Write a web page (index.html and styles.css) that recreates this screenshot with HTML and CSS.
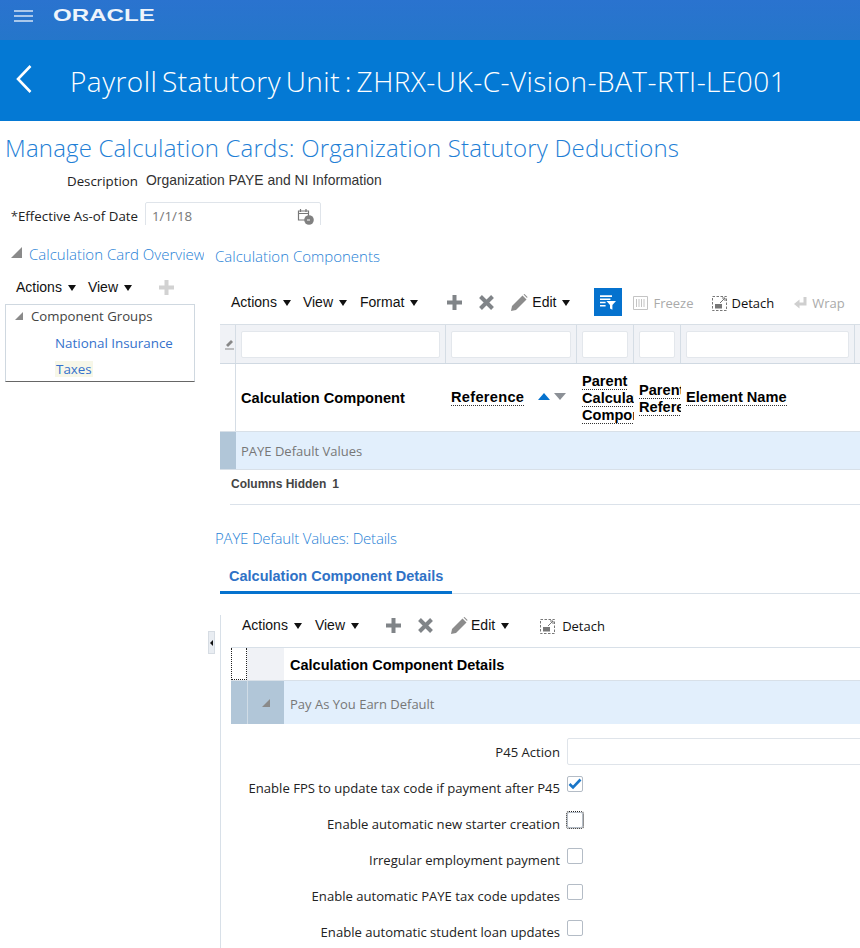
FILE: index.html
```html
<!DOCTYPE html>
<html lang="en">
<head>
<meta charset="utf-8">
<title>Manage Calculation Cards</title>
<link rel="stylesheet" href="styles.css">
</head>
<body>
<header class="topbar">
  <svg class="burger" width="20" height="12" viewBox="0 0 20 12"><path d="M0 1h19M0 6h19M0 11h19" stroke="#d5e4f5" stroke-width="1.6" fill="none"/></svg>
  <span class="logo">ORACLE</span>
</header>
<div class="titlebar">
  <svg class="back" width="18" height="30" viewBox="0 0 18 30"><path d="M15.500 2 L3 15 L15.500 28" stroke="#fff" stroke-width="2.600" fill="none"/></svg>
  <span class="title">Payroll Statutory Unit : ZHRX-UK-C-Vision-BAT-RTI-LE001</span>
</div>
<main>
  <h1 class="page-heading">Manage Calculation Cards: Organization Statutory Deductions</h1>
  <div class="form-row desc-row">
    <span class="form-label">Description</span>
    <span class="form-value">Organization PAYE and NI Information</span>
  </div>
  <div class="form-row date-row">
    <span class="form-label"><span class="req">*</span>Effective As-of Date</span>
    <span class="date-input">1/1/18
      <svg class="cal" width="18" height="17" viewBox="0 0 18 17"><path d="M1.500 3h10v9h-10zM3.500 1v3M9 1v3M1.500 5.500h10" stroke="#777" stroke-width="1.200" fill="none"/><circle cx="12" cy="12" r="4.800" fill="#808080"/><path d="M10 12h3" stroke="#fff"/></svg>
    </span>
  </div>
  <div class="split">
    <span class="splitter"><i></i></span>
    <aside class="left">
      <div class="section-head">
        <span class="tri tri-big"></span>
        <span class="section-title clip">Calculation Card Overview</span>
      </div>
      <div class="toolbar left-tools">
        <span class="menu">Actions<i class="caret"></i></span>
        <span class="menu">View<i class="caret"></i></span>
        <svg class="ico plus-light" width="15" height="15" viewBox="0 0 15 15"><path d="M7.500 0v15M0 7.500h15" stroke="#d2d2d2" stroke-width="4"/></svg>
      </div>
      <div class="tree">
        <div class="tree-root"><span class="tri tri-small"></span>Component Groups</div>
        <a class="tree-link">National Insurance</a>
        <a class="tree-link"><span class="selected">Taxes</span></a>
      </div>
    </aside>
    <section class="right">
      <h2 class="section-title comp-title">Calculation Components</h2>
      <div class="toolbar main-tools">
        <span class="menu">Actions<i class="caret"></i></span>
        <span class="menu">View<i class="caret"></i></span>
        <span class="menu">Format<i class="caret"></i></span>
        <svg class="ico t-plus" width="15" height="15" viewBox="0 0 15 15"><path d="M7.500 0v15M0 7.500h15" stroke="#808488" stroke-width="4"/></svg>
        <svg class="ico t-x" width="15" height="15" viewBox="0 0 15 15"><path d="M1.500 1.500l12 12M13.500 1.500l-12 12" stroke="#808488" stroke-width="4"/></svg>
        <svg class="ico t-pencil" width="17" height="17" viewBox="0 0 17 17"><path d="M0 17l1-5L11.500 1.500l4 4L5 16z" fill="#8c8c8c"/><path d="M12.500.5l1-.5 3 3-.5 1z" fill="#8c8c8c"/></svg>
        <span class="menu edit">Edit<i class="caret"></i></span>
        <span class="filter-btn"><svg width="16" height="15" viewBox="0 0 20 18"><path d="M0 1h15M0 5h13M0 9h7M0 13h7" stroke="#fff" stroke-width="2"/><path d="M8 7h12l-4.500 5v6l-3-1.500V12z" fill="#fff"/></svg></span>
        <span class="tool off t-freeze"><svg width="15" height="14" viewBox="0 0 15 14"><path d="M.500.500h14v13H.500zM3.500 3v8M6 3v8M8.500 3v8M11 3v8" stroke="#c4c4c4" fill="none"/></svg>Freeze</span>
        <span class="tool t-detach"><svg class="detach" width="15" height="15" viewBox="0 0 15 15"><path d="M.500.500h14v14H.500z" stroke="#777" stroke-dasharray="2.500 1.500" fill="none"/><path d="M8 7L13 2M10 2H13v3" stroke="#777" fill="none"/><path d="M3 8h7v4.500H3z" fill="#777"/></svg>Detach</span>
        <span class="tool off t-wrap"><svg width="13" height="13" viewBox="0 0 13 13"><path d="M11 0v7H4" stroke="#cfcfcf" stroke-width="3" fill="none"/><path d="M5.500 2.500v9L0 7z" fill="#cfcfcf"/></svg>Wrap</span>
      </div>
      <div class="table main-table">
        <div class="tr filter-row">
          <div class="td c0"><svg width="10" height="12" viewBox="0 0 10 12"><path d="M1 7l5-5 2 2-5 5z" fill="#888"/><path d="M0 11h9" stroke="#888"/></svg></div>
          <div class="td c1"><span class="filter-input"></span></div>
          <div class="td c2"><span class="filter-input"></span></div>
          <div class="td c3"><span class="filter-input"></span></div>
          <div class="td c4"><span class="filter-input"></span></div>
          <div class="td c5"><span class="filter-input"></span></div>
          <div class="td c6"></div>
        </div>
        <div class="tr head-row">
          <div class="td c0"></div>
          <div class="td c1"><span class="th">Calculation Component</span></div>
          <div class="td c2"><span class="th th-ref"><u>Reference</u></span>
            <span class="sort"><i class="sort-up"></i><i class="sort-down"></i></span></div>
          <div class="td c3"><span class="th stack"><u>Parent</u><u>Calculation</u><u>Component</u></span></div>
          <div class="td c4"><span class="th stack"><u>Parent</u><u>Reference</u></span></div>
          <div class="td c5"><span class="th"><u>Element Name</u></span></div>
          <div class="td c6"></div>
        </div>
        <div class="tr data-row">
          <div class="td c0 sel"></div>
          <div class="td c1"><span class="cell-text">PAYE Default Values</span></div>
        </div>
      </div>
      <div class="status"><b>Columns Hidden</b><b class="count">1</b></div>
      <h2 class="section-title details-title">PAYE Default Values: Details</h2>
      <div class="tabs"><span class="tab">Calculation Component Details</span></div>
      <div class="tab-panel">
        <div class="toolbar detail-tools">
          <span class="menu">Actions<i class="caret"></i></span>
          <span class="menu">View<i class="caret"></i></span>
          <svg class="ico d-plus" width="15" height="15" viewBox="0 0 15 15"><path d="M7.500 0v15M0 7.500h15" stroke="#808488" stroke-width="4"/></svg>
          <svg class="ico t-x" width="15" height="15" viewBox="0 0 15 15"><path d="M1.500 1.500l12 12M13.500 1.500l-12 12" stroke="#808488" stroke-width="4"/></svg>
          <svg class="ico t-pencil" width="17" height="17" viewBox="0 0 17 17"><path d="M0 17l1-5L11.500 1.500l4 4L5 16z" fill="#8c8c8c"/><path d="M12.500.5l1-.5 3 3-.5 1z" fill="#8c8c8c"/></svg>
          <span class="menu edit">Edit<i class="caret"></i></span>
          <span class="tool d-detach"><svg class="detach" width="15" height="15" viewBox="0 0 15 15"><path d="M.500.500h14v14H.500z" stroke="#777" stroke-dasharray="2.500 1.500" fill="none"/><path d="M8 7L13 2M10 2H13v3" stroke="#777" fill="none"/><path d="M3 8h7v4.500H3z" fill="#777"/></svg>Detach</span>
        </div>
        <div class="detail-table">
          <div class="dt-head">
            <span class="dt-a dotted"></span><span class="dt-b"></span>
            <span class="dt-c">Calculation Component Details</span>
          </div>
          <div class="dt-row">
            <span class="dt-a sel"></span><span class="dt-b sel"><i class="tri tri-small"></i></span>
            <span class="dt-text">Pay As You Earn Default</span>
          </div>
        </div>
        <form class="fields">
          <div class="field"><label>P45 Action</label><span class="text-input"></span></div>
          <div class="field"><label>Enable FPS to update tax code if payment after P45</label><span class="check"><svg width="14" height="12" viewBox="0 0 14 12"><path d="M1.500 6l3.500 3.500L12.500 1.500" stroke="#1a76c8" stroke-width="2.600" fill="none"/></svg></span></div>
          <div class="field"><label>Enable automatic new starter creation</label><span class="check focus"></span></div>
          <div class="field"><label>Irregular employment payment</label><span class="check"></span></div>
          <div class="field"><label>Enable automatic PAYE tax code updates</label><span class="check"></span></div>
          <div class="field"><label>Enable automatic student loan updates</label><span class="check"></span></div>
        </form>
      </div>
    </section>
  </div>
</main>
</body>
</html>
```
FILE: styles.css
```css
html, body { margin: 0; padding: 0; }
body {
  width: 860px; height: 948px; overflow: hidden; background: #fff;
  font-family: "Open Sans", "Liberation Sans", sans-serif; font-size: 13px; color: #222;
}
h1, h2 { margin: 0; font-weight: 300; }
i { font-style: normal; display: inline-block; }

.topbar { height: 40px; background: linear-gradient(#2a73cf, #2576ca); display: flex; align-items: flex-start; box-sizing: border-box; padding: 10px 0 0 14px; }
.burger { display: block; }
.logo { margin-left: 19px; color: #eef4fb; font: 700 16.500px/12px "Liberation Sans", sans-serif; display: inline-block; transform: scaleX(1.46); transform-origin: 0 0; margin-top: -1px; height: 12px; }
.titlebar { height: 81px; background: #0479d4; display: flex; align-items: center; color: #fff; padding-left: 15px; box-sizing: border-box; }
.title { margin-left: 37px; font-size: 28px; font-weight: 300; line-height: 40px; font-family: "Open Sans", sans-serif; letter-spacing: .46px; word-spacing: -3px; white-space: nowrap; }
.back { display: block; margin-top: -4px; }

.page-heading { font-size: 24px; line-height: 32px; color: #1f7fd6; padding: 11px 0 0 5px; letter-spacing: .19px; white-space: nowrap; }
.form-row { display: flex; font-size: 13.300px; }
.form-label { width: 138px; text-align: right; color: #222; white-space: nowrap; }
.form-value { margin-left: 8px; color: #333; font: 13.900px/18px "Liberation Sans", sans-serif; margin-top: -1px; }
.desc-row { margin-top: 8px; line-height: 18px; }
.date-row { margin-top: 12px; line-height: 28px; height: 23px; overflow: hidden; }
.req { color: #333; }
.date-input { margin-left: 7px; width: 176px; height: 26px; box-sizing: border-box; border: 1px solid #dfe4ea; border-radius: 2px; padding-left: 6px; position: relative; color: #777; line-height: 26px; }
.cal { position: absolute; right: 5px; top: 5px; }

.split { display: flex; margin-top: 18px; position: relative; }
.left { width: 215px; flex: none; }
.right { flex: none; width: 645px; overflow: hidden; }
.section-title { color: #1f7fd6; font-weight: 300; font-size: 15px; line-height: 22px; }
.section-head { display: flex; align-items: center; height: 22px; padding-left: 11px; }
.clip { display: block; width: 175px; overflow: hidden; white-space: nowrap; margin-left: 7px; }
.tri { display: inline-block; width: 0; height: 0; }
.tri-big { border-style: solid; border-width: 0 0 11px 11px; border-color: transparent transparent #8a8a8a transparent; margin-top: -3px; }
.tri-small { border-style: solid; border-width: 0 0 8px 8px; border-color: transparent transparent #8a8a8a transparent; }

.toolbar { display: flex; align-items: center; font-family: "Liberation Sans", sans-serif; font-size: 14px; color: #111; }
.menu { white-space: nowrap; }
.caret { width: 0; height: 0; border-style: solid; border-width: 6px 4.500px 0; border-color: #111 transparent transparent; margin-left: 6px; vertical-align: 1px; }
.left-tools { padding-left: 16px; height: 22px; margin-top: 11px; }
.left-tools .menu + .menu { margin-left: 12px; }
.plus-light { margin-left: 27px; }
.ico { display: block; flex: none; }

.tree { margin: 6px 20px 0 5px; height: 78px; box-sizing: border-box; border: 1px solid #cfd8e0; border-bottom-color: #666; font-size: 13px; }
.tree-root { padding: 0 0 0 9px; line-height: 18px; color: #444; display: flex; align-items: center; gap: 8px; height: 22px; box-sizing: border-box; font-size: 13.200px; margin-bottom: 1px; }
.tree-link { display: block; color: #3572cc; margin-left: 49px; line-height: 26px; font-size: 13.400px; position: relative; top: 2px; }
.selected { background: #f7f7e8; padding: 0 1px; display: inline-block; line-height: 16px; }

.comp-title { line-height: 22px; margin-top: 2px; }
.main-tools { margin-top: 20px; height: 30px; padding-left: 16px; }
.main-tools .menu + .menu { margin-left: 12px; }
.main-tools .menu:nth-child(3) { margin-left: 13px; }
.t-plus { margin-left: 29px; }
.t-x { margin-left: 17px; }
.t-pencil { margin-left: 17px; }
.edit { margin-left: 4px; }
.main-tools .menu.edit { margin-left: 4px; }
.filter-btn { width: 28px; height: 28px; background: #0572ce; margin-left: 24px; display: flex; align-items: center; justify-content: center; flex: none; }
.tool { display: inline-flex; align-items: center; gap: 5px; white-space: nowrap; font: 13px/16px "Open Sans", sans-serif; margin-top: 2px; }
.off { color: #aaa; }
.t-freeze { margin-left: 11px; }
.t-detach { margin-left: 18px; }
.t-wrap { margin-left: 20px; }

.table { margin-top: 7px; margin-left: 5px; width: 640px; }
.tr { display: flex; }
.td { box-sizing: border-box; flex: none; display: flex; align-items: center; }
.c0 { width: 16px; } .c1 { width: 210px; } .c2 { width: 131px; } .c3 { width: 57px; } .c4 { width: 47px; } .c5 { width: 174px; } .c6 { width: 5px; }
.filter-row { height: 40px; background: #f0f2f6; border-top: 1px solid #d8dfe6; border-bottom: 1px solid #d0d9e2; box-sizing: border-box; }
.filter-row .td { border-right: 1px solid #d5dde5; height: 100%; padding: 0 5px; justify-content: center; }
.filter-row .c0 { padding: 0 0 0 4px; }
.filter-input { display: block; width: 100%; height: 27px; background: #fff; border: 1px solid #e3e7ec; border-radius: 2px; box-sizing: border-box; }
.head-row { height: 68px; border-bottom: 1px solid #d8e0e8; box-sizing: border-box; }
.head-row .td { padding-left: 5px; overflow: hidden; }
.head-row .c0 { border-right: 1px solid #d5dde5; }
.th { font: 700 14.600px/16px "Liberation Sans", sans-serif; color: #000; white-space: nowrap; }
.th u { text-decoration: none; border-bottom: 1px dotted #333; display: block; width: max-content; }
.th-ref { letter-spacing: .3px; }
.stack { display: block; margin-top: 2px; }
.sort { display: inline-flex; gap: 4px; margin-left: 14px; margin-top: -3px; }
.sort-up { border-style: solid; border-width: 0 6.500px 7px; border-color: transparent transparent #0572ce; }
.sort-down { border-style: solid; border-width: 7px 6.500px 0; border-color: #8c9096 transparent transparent; }
.data-row { height: 38px; background: #e2effc; border-bottom: 1px solid #d8e0e8; box-sizing: border-box; }
.data-row .c0 { background: #b1c6d8; }
.data-row .c1 { padding-left: 5px; }
.cell-text, .dt-text { color: #777; font-size: 13px; }
.status { margin-left: 15px; margin-top: 6px; height: 28px; border-bottom: 1px solid #dbe2ea; font: 12px/17px "Liberation Sans", sans-serif; color: #444; padding-left: 1px; }
.count { margin-left: 6px; }
.details-title { margin-top: 22px; letter-spacing: -.2px; }
.tabs { margin-top: 12px; margin-left: 5px; border-bottom: 1px solid #d8e0e8; height: 33px; box-sizing: border-box; }
.tab { display: inline-block; height: 33px; box-sizing: border-box; padding: 0 9px 0 9px; border-bottom: 3px solid #0572ce; font: 700 14.500px/30px "Liberation Sans", sans-serif; color: #2f72c6; white-space: nowrap; }
.tab-panel { margin-left: 5px; border-left: 1px solid #d8e0e8; height: 360px; }
.splitter { position: absolute; left: 208px; top: 388px; width: 7px; height: 23px; background: #e9edf2; box-sizing: border-box; border: 1px solid #d6dce3; display: flex; align-items: center; justify-content: center; }
.splitter i { width: 0; height: 0; border-style: solid; border-width: 3px 3px 3px 0; border-color: transparent #111 transparent transparent; }
.detail-tools { padding-left: 21px; height: 20px; margin-top: 21px; }
.detail-tools .menu + .menu { margin-left: 13px; }
.d-plus { margin-left: 27px; }
.tab-panel .t-pencil { margin-left: 18px; }
.tab-panel .menu.edit { margin-left: 3px; }
.d-detach { margin-left: 31px; gap: 7px; }
.detail-table { margin: 12px 0 0 10px; width: 629px; }
.dt-head { display: flex; height: 34px; border-top: 1px solid #d8e0e8; border-bottom: 1px solid #d8e0e8; box-sizing: border-box; }
.dt-a { width: 16px; flex: none; box-sizing: border-box; }
.dt-b { width: 37px; flex: none; background: #f0f2f6; box-sizing: border-box; display: flex; align-items: center; justify-content: center; }
.dotted { border: 1px dotted #222; border-top: 0; }
.dt-c { padding-left: 6px; font: 700 14.500px/35px "Liberation Sans", sans-serif; color: #000; white-space: nowrap; }
.dt-row { display: flex; height: 43px; background: #e2effc; }
.sel { background: #b1c6d8; }
.dt-b.sel { border-left: 1px solid #d0dce6; }
.dt-text { line-height: 46px; padding-left: 6px; }
.fields { margin-top: 10px; }
.field { display: flex; align-items: center; height: 36px; }
.field label { width: 339px; text-align: right; font-size: 13.100px; color: #222; flex: none; white-space: nowrap; }
.text-input { width: 300px; height: 27px; border: 1px solid #dfe4ea; border-radius: 2px; box-sizing: border-box; margin-left: 7px; flex: none; margin-top: -1px; }
.check { width: 16px; height: 16px; box-sizing: border-box; border: 1px solid #b4bcc6; border-radius: 2px; margin-left: 7px; margin-top: -8px; display: flex; align-items: center; justify-content: center; }
.check.focus { outline: 1px dotted #222; outline-offset: 0; }
```
